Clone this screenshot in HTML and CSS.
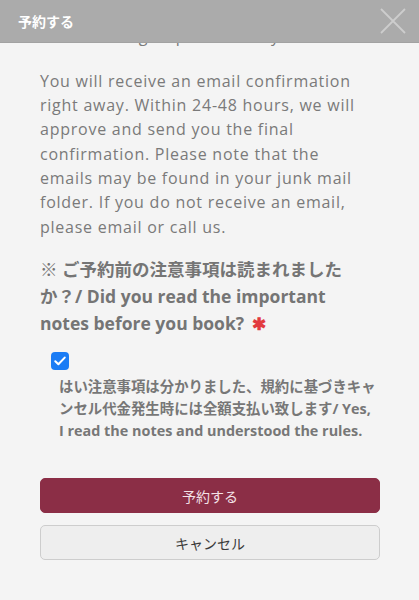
FILE: index.html
```html
<!DOCTYPE html>
<html lang="ja">
<head>
<meta charset="utf-8">
<title>予約する</title>
<link rel="stylesheet" href="styles.css">
</head>
<body>
<header class="modal-header">
  <span class="modal-title">予約する</span>
  <button class="close" aria-label="閉じる">
    <svg width="28" height="26" viewBox="0 0 28 26"><path d="M2 1 L26 25 M26 1 L2 25" stroke="#cdcdcd" stroke-width="1.8" fill="none"/></svg>
  </button>
</header>
<main class="content">
  <p class="note hidden-line">Your booking request is not yet confirmed.</p>
  <p class="note">You will receive an email confirmation right away. Within 24-48 hours, we will approve and send you the final confirmation. Please note that the emails may be found in your junk mail folder. If you do not receive an email, please email or call us.</p>
  <h2 class="question">※ ご予約前の注意事項は読まれましたか？/ Did you read the important notes before you book? <span class="req">✱</span></h2>
  <div class="agree">
    <span class="check" role="checkbox" aria-checked="true">
      <svg width="12" height="10" viewBox="0 0 12 10"><path d="M1.3 5.2 L4.4 8.3 L10.7 1.6" stroke="#fff" stroke-width="2" fill="none" stroke-linecap="round" stroke-linejoin="round"/></svg>
    </span>
    <p class="agree-text">はい注意事項は分かりました、規約に基づきキャンセル代金発生時には全額支払い致します/ Yes, I read the notes and understood the rules.</p>
  </div>
  <div class="actions">
    <button class="btn btn-primary">予約する</button>
    <button class="btn btn-cancel">キャンセル</button>
  </div>
</main>
</body>
</html>
```

FILE: styles.css
```css
html, body {
  margin: 0;
  padding: 0;
  background: #f4f4f4;
  height: 100%;
  overflow: hidden;
}
body {
  font-family: "Open Sans", "Noto Sans CJK JP", sans-serif;
  color: #777;
}
.modal-header {
  position: fixed;
  top: 0;
  left: 0;
  right: 0;
  height: 43px;
  background: #ababab;
  display: flex;
  align-items: center;
  justify-content: space-between;
  padding: 0 12px 0 18px;
  box-sizing: border-box;
  z-index: 2;
  border-bottom: 1px solid #a2a2a2;
}
.modal-title {
  color: #fff;
  font-family: "Noto Sans CJK JP", sans-serif;
  font-weight: 700;
  font-size: 14px;
}
.close {
  background: none;
  border: 0;
  padding: 0;
  display: flex;
}
.content {
  padding: 24px 39px 0 40px;
}
.note {
  margin: 0 14px 17.5px 0;
  font-size: 16px;
  line-height: 24.3px;
  letter-spacing: 0.75px;
  color: #7a7a7a;
}
.hidden-line {
  white-space: nowrap;
  overflow: hidden;
  margin-bottom: 20.5px;
}
.question {
  margin: 0 0 15px;
  padding-right: 8px;
  font-size: 17.5px;
  line-height: 27px;
  font-weight: 700;
  color: #757575;
}
.req {
  color: #e23b3f;
  font-size: 17px;
  margin-left: 3px;
}
.agree {
  padding-left: 11px;
  display: flex;
  flex-direction: column;
  align-items: flex-start;
  gap: 6px;
}
.check {
  width: 18px;
  height: 18px;
  border-radius: 4px;
  background: #1a7cf5;
  display: flex;
  align-items: center;
  justify-content: center;
}
.agree-text {
  margin: 0;
  padding: 0 3px 0 8px;
  font-size: 14.4px;
  line-height: 22px;
  font-weight: 700;
  color: #777;
}
.actions {
  margin-top: 36px;
  display: flex;
  flex-direction: column;
  gap: 12px;
}
.btn {
  height: 35px;
  border-radius: 5px;
  font-family: "Noto Sans CJK JP", sans-serif;
  font-size: 14px;
  cursor: pointer;
}
.btn-primary {
  background: #8b2e46;
  border: 1px solid #8b2e46;
  color: #f3e1e6;
}
.btn-cancel {
  background: #eeeeee;
  border: 1px solid #cdcdcd;
  color: #3a3a3a;
}
```
